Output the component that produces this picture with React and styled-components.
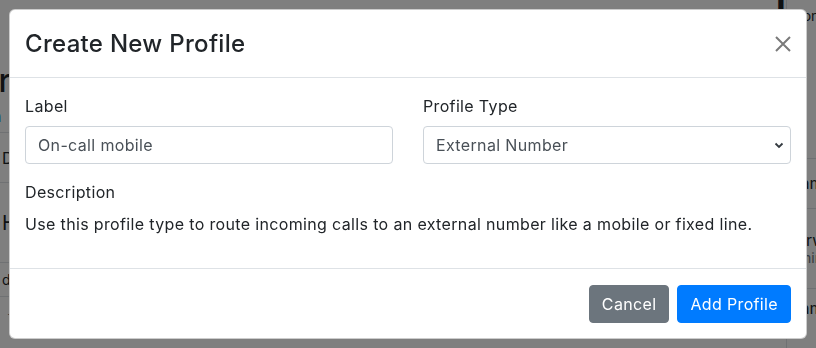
import React from "react";
import styled, { createGlobalStyle } from "styled-components";

const GlobalStyle = createGlobalStyle`
  * { box-sizing: border-box; }
  html, body { margin: 0; padding: 0; background: #fff; }
  body {
    font-family: Inter, "Open Sans", "Liberation Sans", sans-serif;
    color: #212529;
    font-size: 16px;
    line-height: 1.5;
    overflow: hidden;
  }
`;

/* ---------- page behind the modal ---------- */
const Page = styled.div`
  width: 816px;
  height: 348px;
  display: grid;
  grid-template-columns: 1fr 30px;
  column-gap: 6px;
`;

const Main = styled.div`
  display: flex;
  flex-direction: column;
  padding-top: 62px;
`;

const PageTitle = styled.h1`
  margin: 0 0 0 -22px;
  font-size: 32px;
  font-weight: 500;
  line-height: 1.2;
`;

const PageLink = styled.a`
  color: #007bff;
  font-size: 16px;
  margin: 4px 0 0 -8px;
  height: 28px;
`;

const TableRow = styled.div`
  display: flex;
  align-items: center;
  gap: 200px;
  border-top: 1px solid #dee2e6;
  height: ${(p) => p.$h}px;
  font-size: ${(p) => p.$fs || 16}px;
  padding-left: ${(p) => p.$pl || 2}px;
`;

const Muted = styled.span`
  color: #6c757d;
  font-size: ${(p) => p.$fs || 14}px;
`;

const Aside = styled.div`
  display: flex;
  flex-direction: column;
  border-left: 1px solid #dee2e6;
  padding-left: 4px;
  font-size: 16px;
`;

const AsideTop = styled.div`
  font-size: 14px;
  line-height: 12px;
  height: 160px;
  margin-top: -2px;
  margin-left: -14px;
`;

const AsideRow = styled.div`
  border-top: 1px solid #dee2e6;
  height: ${(p) => p.$h}px;
  display: flex;
  flex-direction: column;
  justify-content: center;
  font-size: ${(p) => p.$fs || 16}px;
  line-height: 1.2;
`;

/* ---------- modal ---------- */
const Backdrop = styled.div`
  position: fixed;
  inset: 0;
  background: rgba(0, 0, 0, 0.5);
  display: flex;
  align-items: flex-start;
  justify-content: center;
  padding: 9px;
`;

const Dialog = styled.div`
  width: 798px;
  background: #fff;
  border: 1px solid rgba(0, 0, 0, 0.2);
  border-radius: 6px;
  display: flex;
  flex-direction: column;
  font-family: Inter, "Open Sans", "Liberation Sans", sans-serif;
  letter-spacing: 0.35px;
`;

const Header = styled.div`
  display: flex;
  align-items: center;
  justify-content: space-between;
  padding: 16px 15px 15px 15px;
  border-bottom: 1px solid #dee2e6;
`;

const Title = styled.h4`
  margin: 0;
  font-size: 24px;
  font-weight: 500;
  line-height: 36px;
  letter-spacing: 0.3px;
`;

const CloseButton = styled.button`
  border: 0;
  background: transparent;
  padding: 0;
  width: 16px;
  height: 16px;
  display: flex;
  align-items: center;
  justify-content: center;
  color: #7a7a7a;
  cursor: pointer;
`;

const Body = styled.div`
  padding: 16px 15px;
`;

const Row = styled.div`
  display: grid;
  grid-template-columns: 1fr 1fr;
  column-gap: 30px;
`;

const Group = styled.div`
  display: flex;
  flex-direction: column;
  margin-bottom: 16px;
`;

const Label = styled.label`
  font-size: 16px;
  line-height: 24px;
  margin-bottom: 8px;
`;

const fieldBase = `
  height: 38px;
  border: 1px solid #ced4da;
  border-radius: 4px;
  font-family: Inter, "Open Sans", "Liberation Sans", sans-serif;
  font-size: 16px;
  letter-spacing: 0.35px;
  color: #495057;
  background-color: #fff;
  padding: 6px 12px;
  width: 100%;
`;

const Input = styled.input`
  ${fieldBase}
`;

const Select = styled.select`
  ${fieldBase}
  appearance: none;
  -webkit-appearance: none;
  padding-right: 32px;
  background-image: url("data:image/svg+xml,%3csvg xmlns='http://www.w3.org/2000/svg' width='10' height='7' viewBox='0 0 10 7'%3e%3cpath fill='none' stroke='%23343a40' stroke-width='1.8' d='M1.5 1.5l3.5 3.5 3.5-3.5'/%3e%3c/svg%3e");
  background-repeat: no-repeat;
  background-position: right 6px center;
  background-size: 10px 7px;
`;

const Description = styled.p`
  margin: 0;
  font-size: 16px;
  line-height: 24px;
`;

const Footer = styled.div`
  display: flex;
  justify-content: flex-end;
  align-items: center;
  gap: 8px;
  padding: 16px 15px 15px;
  border-top: 1px solid #dee2e6;
`;

const Button = styled.button`
  height: 38px;
  padding: 6px 12px;
  border-radius: 4px;
  border: 1px solid ${(p) => (p.$variant === "primary" ? "#007bff" : "#6c757d")};
  background: ${(p) => (p.$variant === "primary" ? "#007bff" : "#6c757d")};
  color: #fff;
  font-family: Inter, "Open Sans", "Liberation Sans", sans-serif;
  font-size: 16px;
  letter-spacing: 0.35px;
  line-height: 24px;
  cursor: pointer;
`;

export default function App() {
  return (
    <>
      <GlobalStyle />
      <Page>
        <Main>
          <PageTitle>Profiles</PageTitle>
          <PageLink>n</PageLink>
          <TableRow $h={50}>Date</TableRow>
          <TableRow $h={80} $fs={20}>Home</TableRow>
          <TableRow $h={34} $fs={14}>
            <span>default</span>
          </TableRow>
          <TableRow $h={40} $fs={14} $pl={8}>
            <Muted>fixed line number</Muted>
            <Muted>Use the buttons above to toggle between different schedules.</Muted>
          </TableRow>
        </Main>
        <Aside>
          <AsideTop>▮ Actions</AsideTop>
          <AsideRow $h={50}>name</AsideRow>
          <AsideRow $h={80}>
            <span>forward</span>
            <Muted>timing</Muted>
          </AsideRow>
          <AsideRow $h={40}>name</AsideRow>
        </Aside>
      </Page>
      <Backdrop>
        <Dialog>
          <Header>
            <Title>Create New Profile</Title>
            <CloseButton aria-label="Close">
              <svg width="16" height="16" viewBox="0 0 16 16">
                <path d="M1 1L15 15M15 1L1 15" stroke="currentColor" strokeWidth="2" />
              </svg>
            </CloseButton>
          </Header>
          <Body>
            <Row>
              <Group>
                <Label>Label</Label>
                <Input defaultValue="On-call mobile" />
              </Group>
              <Group>
                <Label>Profile Type</Label>
                <Select defaultValue="external">
                  <option value="external">External Number</option>
                  <option value="user">User</option>
                </Select>
              </Group>
            </Row>
            <Group>
              <Label>Description</Label>
              <Description>
                Use this profile type to route incoming calls to an external number like a mobile or fixed line.
              </Description>
            </Group>
          </Body>
          <Footer>
            <Button $variant="secondary">Cancel</Button>
            <Button $variant="primary">Add Profile</Button>
          </Footer>
        </Dialog>
      </Backdrop>
    </>
  );
}
